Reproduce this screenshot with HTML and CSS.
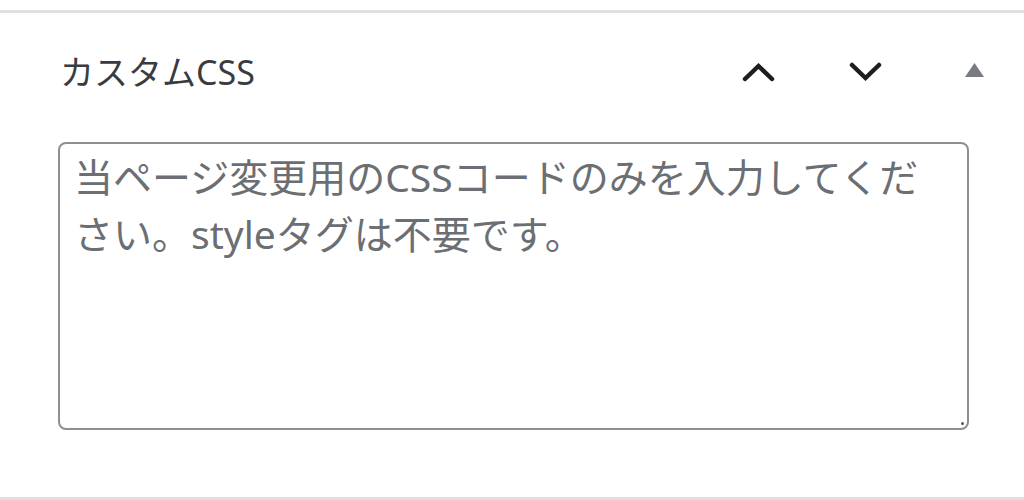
FILE: index.html
```html
<!DOCTYPE html>
<html lang="ja">
<head>
    <meta charset="UTF-8">
    <meta name="viewport" content="width=device-width, initial-scale=1.0">
    <title>カスタムCSS</title>
    <link rel="stylesheet" href="styles.css">
</head>
<body>
    <div class="postbox">
        <div class="postbox-header">
            <h2 class="postbox-title">カスタムCSS</h2>
            <div class="handle-actions">
                <button type="button" class="handle-btn up" aria-label="上へ移動">
                    <svg width="33" height="20" viewBox="0 0 33 20"><polyline points="3,17 16.5,4 30,17" fill="none" stroke="#1e1e1e" stroke-width="4.5" stroke-linecap="round" stroke-linejoin="miter"/></svg>
                </button>
                <button type="button" class="handle-btn down" aria-label="下へ移動">
                    <svg width="33" height="20" viewBox="0 0 33 20"><polyline points="3,3 16.5,16 30,3" fill="none" stroke="#1e1e1e" stroke-width="4.5" stroke-linecap="round" stroke-linejoin="miter"/></svg>
                </button>
                <button type="button" class="handle-btn toggle" aria-label="パネルを切り替え">
                    <svg width="19" height="14" viewBox="0 0 19 14"><polygon points="0,14 9.5,0 19,14" fill="#787c82"/></svg>
                </button>
            </div>
        </div>
        <div class="inside">
            <textarea class="custom-css" placeholder="当ページ変更用のCSSコードのみを入力してください。styleタグは不要です。"></textarea>
        </div>
    </div>
</body>
</html>
```

FILE: styles.css
```css
body {
    margin: 0;
    padding-top: 10px;
    background: #fff;
    font-family: "Noto Sans", "Noto Sans CJK JP", sans-serif;
}
.postbox {
    border-top: 3px solid #e0e0e0;
    border-bottom: 3px solid #e0e0e0;
    height: 490px;
    box-sizing: border-box;
}
.postbox-header {
    display: flex;
    align-items: center;
    justify-content: space-between;
    height: 114px;
    padding: 0 40px 0 60px;
}
.postbox-title {
    margin: 0;
    font-size: 34px;
    font-weight: normal;
    color: #383c40;
}
.handle-actions {
    display: flex;
    align-items: center;
    margin-top: 4px;
}
.handle-btn {
    background: none;
    border: none;
    padding: 0;
    margin: 0;
    display: flex;
    cursor: pointer;
}
.handle-btn.down {
    margin-left: 74px;
}
.handle-btn.toggle {
    margin-left: 83px;
    margin-top: -4px;
}
.inside {
    position: relative;
    width: 911px;
    margin: 15px 0 0 58px;
}
.inside::after {
    content: "";
    position: absolute;
    right: 5px;
    bottom: 5px;
    width: 3px;
    height: 3px;
    border-radius: 50%;
    background: #555;
}
.custom-css {
    display: block;
    width: 911px;
    height: 288px;
    box-sizing: border-box;
    border: 2px solid #8c8f94;
    border-radius: 8px;
    padding: 4px 14px;
    font-family: "Noto Sans", "Noto Sans CJK JP", sans-serif;
    font-size: 39px;
    line-height: 57px;
    color: #2c3338;
    resize: none;
}
.custom-css::placeholder {
    color: #6b6e72;
    opacity: 1;
}
```
